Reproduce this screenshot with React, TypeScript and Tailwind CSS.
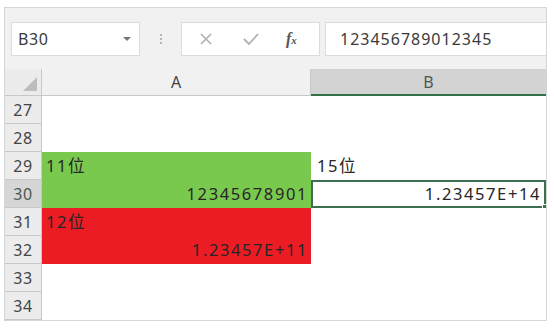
import React from "react";

const font = { fontFamily: '"Noto Sans", "Noto Sans CJK SC", sans-serif' };

export default function App() {
  const rows = [
    { n: 27, a: null, b: null },
    { n: 28, a: null, b: null },
    { n: 29, a: { text: "11位", bg: "green", right: false }, b: { text: "15位", right: false } },
    { n: 30, a: { text: "12345678901", bg: "green", right: true }, b: { text: "1.23457E+14", right: true, selected: true } },
    { n: 31, a: { text: "12位", bg: "red", right: false }, b: null },
    { n: 32, a: { text: "1.23457E+11", bg: "red", right: true }, b: null },
    { n: 33, a: null, b: null },
    { n: 34, a: null, b: null },
  ];

  return (
    <div className="w-[554px] h-[329px] bg-white pt-[7px] pl-[4px]" style={font}>
      <div className="w-[543px] h-[314px] border border-[#d6d6d6] flex flex-col overflow-hidden">
        {/* Formula bar */}
        <div className="h-[61px] bg-[#f1f1f1] flex items-center pl-[6px] shrink-0">
          <div className="w-[129px] h-[34px] bg-white border border-[#dcdcdc] flex items-center justify-between pl-[6px] pr-[8px]">
            <span className="text-[16px] tracking-[0.6px] text-[#3a3a3a]">B30</span>
            <span className="w-0 h-0 border-l-[4px] border-r-[4px] border-t-[4px] border-l-transparent border-r-transparent border-t-[#777]" />
          </div>
          <div className="w-[41px] flex justify-center">
            <div className="flex flex-col gap-[2px]">
              <span className="w-[2px] h-[2px] bg-[#b5b5b5]" />
              <span className="w-[2px] h-[2px] bg-[#b5b5b5]" />
              <span className="w-[2px] h-[2px] bg-[#b5b5b5]" />
            </div>
          </div>
          <div className="w-[139px] h-[34px] bg-white border border-[#dcdcdc] flex items-center">
            <svg width="14" height="14" viewBox="0 0 14 14" className="ml-[17px]">
              <path d="M2 2L12 12M12 2L2 12" stroke="#b0b0b0" strokeWidth="1.6" />
            </svg>
            <svg width="18" height="14" viewBox="0 0 18 14" className="ml-[29px]">
              <path d="M2 7L7 12L16 2" stroke="#b0b0b0" strokeWidth="1.8" fill="none" />
            </svg>
            <span className="ml-[26px] text-[16px] italic font-bold text-[#555]" style={{ fontFamily: '"Liberation Serif", serif' }}>
              f<span className="text-[11px]">x</span>
            </span>
          </div>
          <div className="flex-1 h-[34px] ml-[5px] bg-white border border-[#dcdcdc] border-r-0 flex items-center pl-[14px]">
            <span className="text-[16px] tracking-[1px] text-[#3a3a3a]">123456789012345</span>
          </div>
        </div>

        {/* Grid */}
        <div className="grid grid-cols-[37px_269px_1fr] grid-rows-[27px_repeat(8,28px)]">
          <div className="bg-[#ececec] border-r border-b border-[#c8c8c8] relative">
            <svg width="14" height="14" viewBox="0 0 14 14" className="absolute right-[4px] bottom-[4px]">
              <path d="M14 0L14 14L0 14Z" fill="#bdbdbd" />
            </svg>
          </div>
          <div className="bg-[#f1f1f1] border-r border-b border-[#c8c8c8] flex items-center justify-center text-[16px] text-[#444]">A</div>
          <div className="bg-[#d3d3d3] border-b-2 border-[#2f7346] flex items-center justify-center text-[16px] text-[#555]">B</div>

          {rows.map((r) => (
            <React.Fragment key={r.n}>
              <div
                className={`border-r border-b border-[#c8c8c8] flex items-center justify-center text-[16px] tracking-[0.5px] ${
                  r.n === 30 ? "bg-[#d6d6d6] text-[#4b5a52]" : "bg-[#ececec] text-[#444]"
                }`}
              >
                {r.n}
              </div>
              <div
                className={`flex items-center pl-[4px] pr-[3px] text-[16.5px] tracking-[1.6px] text-[#262626] ${
                  r.a?.right ? "justify-end" : "justify-start"
                } ${r.a?.bg === "green" ? "bg-[#7ac94f]" : r.a?.bg === "red" ? "bg-[#ec1c24]" : "bg-white"}`}
              >
                {r.a?.text}
              </div>
              <div
                className={`relative flex items-center pl-[6px] pr-[3px] text-[16.5px] tracking-[1.6px] text-[#262626] bg-white ${
                  r.b?.right ? "justify-end" : "justify-start"
                } ${r.b?.selected ? "border-2 border-[#3d6e50]" : ""}`}
              >
                {r.b?.text}
                {r.b?.selected && (
                  <span className="absolute right-[-3px] bottom-[-3px] w-[5px] h-[5px] bg-[#3d6e50] border border-white" />
                )}
              </div>
            </React.Fragment>
          ))}
        </div>
      </div>
    </div>
  );
}
